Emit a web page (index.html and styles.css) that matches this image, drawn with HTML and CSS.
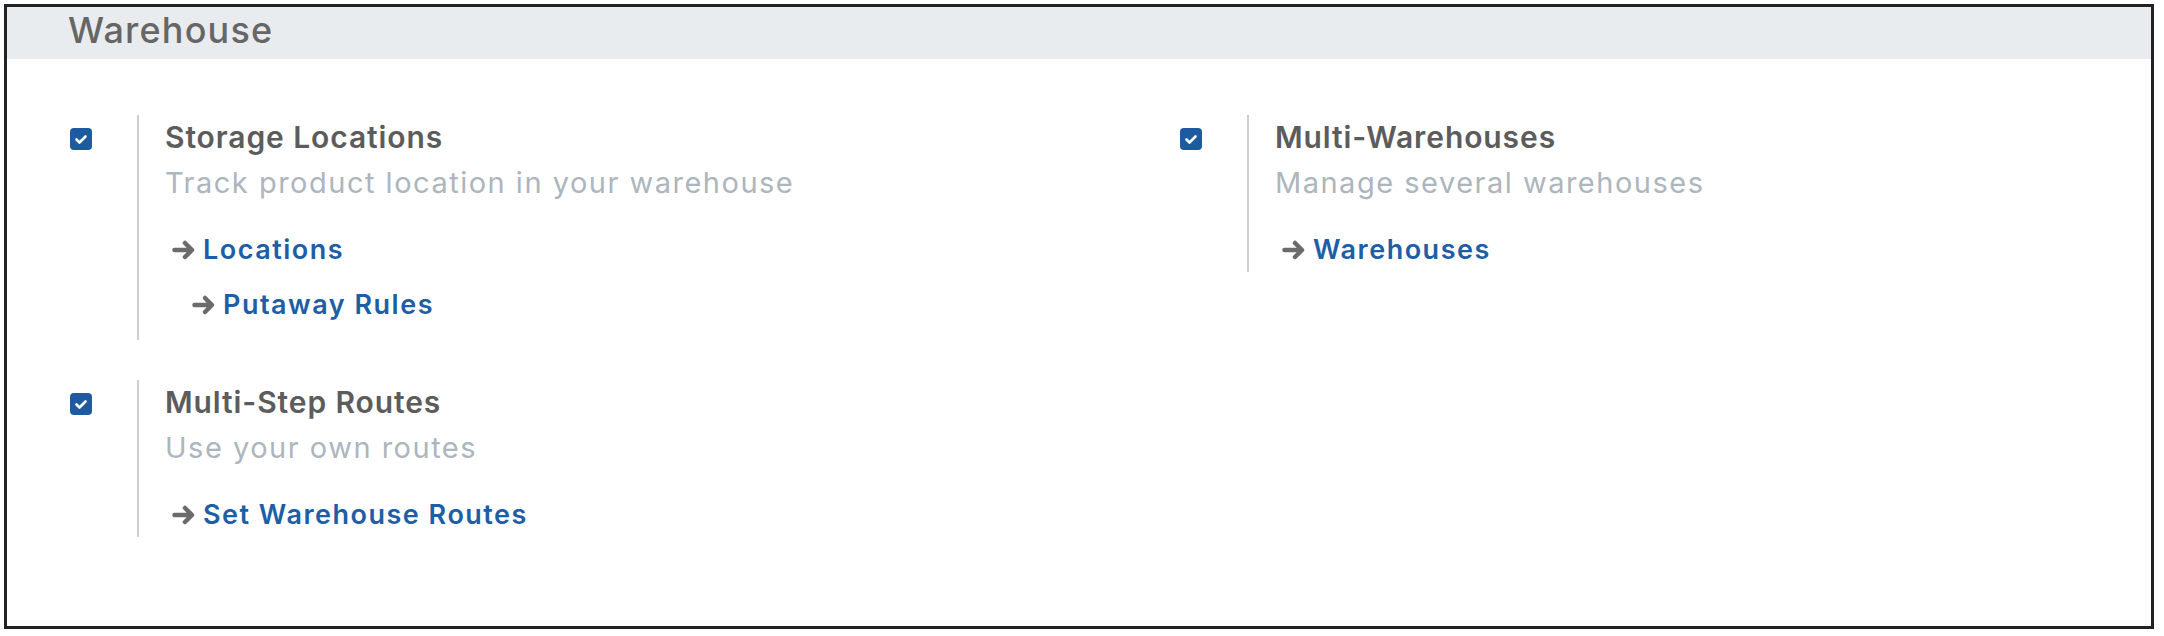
FILE: index.html
```html
<!DOCTYPE html>
<html lang="en">
<head>
  <meta charset="UTF-8">
  <title>Settings - Warehouse</title>
  <link rel="stylesheet" href="styles.css">
</head>
<body>

  <div class="settings-frame">
    <div class="section-header">Warehouse</div>

    <div class="settings-grid">
      <div class="settings-col">

        <div class="setting-box">
          <div class="setting-left">
            <span class="check-box">
              <svg viewBox="0 0 22 22" width="22" height="22"><rect x="0" y="0" width="22" height="22" rx="4" fill="#1e5a9f"/><polyline points="6.5,11.5 9.5,14.5 15.5,8.5" fill="none" stroke="#fff" stroke-width="2.6" stroke-linecap="round" stroke-linejoin="round"/></svg>
            </span>
          </div>
          <div class="setting-right">
            <div class="setting-title">Storage Locations</div>
            <div class="setting-desc">Track product location in your warehouse</div>
            <div class="setting-links">
              <a class="setting-link">
                <svg class="arrow-icon" viewBox="0 0 26 22" width="26" height="22"><path d="M3.5 11h17M14 4l7 7-7 7" fill="none" stroke="#6b6b6b" stroke-width="4.5" stroke-linecap="round" stroke-linejoin="round"/></svg>
                Locations
              </a>
              <a class="setting-link sub-link">
                <svg class="arrow-icon" viewBox="0 0 26 22" width="26" height="22"><path d="M3.5 11h17M14 4l7 7-7 7" fill="none" stroke="#6b6b6b" stroke-width="4.5" stroke-linecap="round" stroke-linejoin="round"/></svg>
                Putaway Rules
              </a>
            </div>
          </div>
        </div>

        <div class="setting-box">
          <div class="setting-left">
            <span class="check-box">
              <svg viewBox="0 0 22 22" width="22" height="22"><rect x="0" y="0" width="22" height="22" rx="4" fill="#1e5a9f"/><polyline points="6.5,11.5 9.5,14.5 15.5,8.5" fill="none" stroke="#fff" stroke-width="2.6" stroke-linecap="round" stroke-linejoin="round"/></svg>
            </span>
          </div>
          <div class="setting-right">
            <div class="setting-title">Multi-Step Routes</div>
            <div class="setting-desc">Use your own routes</div>
            <div class="setting-links">
              <a class="setting-link">
                <svg class="arrow-icon" viewBox="0 0 26 22" width="26" height="22"><path d="M3.5 11h17M14 4l7 7-7 7" fill="none" stroke="#6b6b6b" stroke-width="4.5" stroke-linecap="round" stroke-linejoin="round"/></svg>
                Set Warehouse Routes
              </a>
            </div>
          </div>
        </div>

      </div>

      <div class="settings-col">
        <div class="setting-box">
          <div class="setting-left">
            <span class="check-box">
              <svg viewBox="0 0 22 22" width="22" height="22"><rect x="0" y="0" width="22" height="22" rx="4" fill="#1e5a9f"/><polyline points="6.5,11.5 9.5,14.5 15.5,8.5" fill="none" stroke="#fff" stroke-width="2.6" stroke-linecap="round" stroke-linejoin="round"/></svg>
            </span>
          </div>
          <div class="setting-right">
            <div class="setting-title">Multi-Warehouses</div>
            <div class="setting-desc">Manage several warehouses</div>
            <div class="setting-links">
              <a class="setting-link">
                <svg class="arrow-icon" viewBox="0 0 26 22" width="26" height="22"><path d="M3.5 11h17M14 4l7 7-7 7" fill="none" stroke="#6b6b6b" stroke-width="4.5" stroke-linecap="round" stroke-linejoin="round"/></svg>
                Warehouses
              </a>
            </div>
          </div>
        </div>
      </div>
    </div>
  </div>

</body>
</html>
```

FILE: styles.css
```css
body {
  margin: 0;
  padding: 4px 0 0 4px;
  background: #fff;
  font-family: 'Inter', 'Noto Sans', sans-serif;
}
.settings-frame {
  width: 2150px;
  height: 625px;
  box-sizing: border-box;
  border: 3px solid #222;
  background: #fff;
}
.section-header {
  height: 52px;
  box-sizing: border-box;
  padding-left: 61px;
  background-color: #e9ecef;
  color: #666;
  font-size: 36px;
  font-weight: 500;
  letter-spacing: 1.2px;
  line-height: 46px;
}
.settings-grid {
  display: grid;
  grid-template-columns: 1110px 1fr;
  padding: 56px 0 0 63px;
}
.settings-col {
  display: flex;
  flex-direction: column;
  gap: 40px;
}
.setting-box {
  display: flex;
}
.setting-left {
  width: 67px;
  flex-shrink: 0;
}
.check-box {
  display: block;
  width: 22px;
  height: 22px;
  margin-top: 13px;
}
.check-box svg {
  display: block;
}
.setting-right {
  border-left: 2px solid #cfcfcf;
  padding-left: 26px;
}
.setting-title {
  color: #5c5c5c;
  font-size: 30px;
  font-weight: 600;
  letter-spacing: 0.9px;
  line-height: 45px;
}
.setting-desc {
  color: #adb5bd;
  font-size: 29px;
  letter-spacing: 1.5px;
  line-height: 45px;
}
.setting-links {
  display: flex;
  flex-direction: column;
  align-items: flex-start;
  gap: 19px;
  margin-top: 27px;
  padding-bottom: 4px;
}
.setting-link {
  display: flex;
  align-items: center;
  gap: 6px;
  margin-left: 6px;
  color: #1d5ea6;
  font-size: 27px;
  font-weight: 600;
  letter-spacing: 1.5px;
  line-height: 36px;
  text-decoration: none;
  cursor: pointer;
}
.sub-link {
  margin-left: 26px;
  margin-bottom: 13px;
}
.arrow-icon {
  display: block;
  flex-shrink: 0;
}
```
